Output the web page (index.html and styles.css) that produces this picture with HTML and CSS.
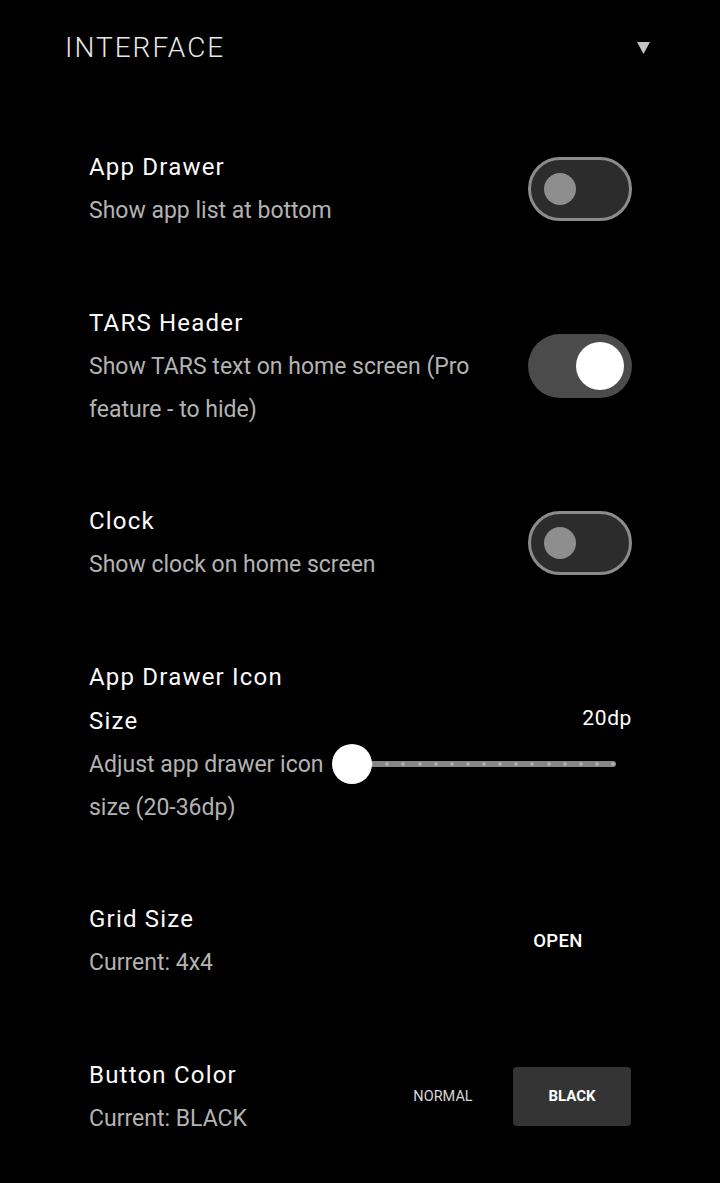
FILE: index.html
```html
<!DOCTYPE html>
<html>
<head>
<meta charset="utf-8">
<link rel="stylesheet" href="styles.css">
</head>
<body>
<div class="screen">
  <div class="section-header">
    <span class="section-title">INTERFACE</span>
    <svg class="caret" width="13" height="12" viewBox="0 0 13 12"><polygon points="0,0 13,0 6.5,12" fill="#c4c4c4"/></svg>
  </div>

  <div class="list">
    <div class="row">
      <div class="text">
        <div class="title">App Drawer</div>
        <div class="sub">Show app list at bottom</div>
      </div>
      <div class="switch off"><span class="knob"></span></div>
    </div>

    <div class="row">
      <div class="text">
        <div class="title">TARS Header</div>
        <div class="sub">Show TARS text on home screen (Pro feature - to hide)</div>
      </div>
      <div class="switch on"><span class="knob"></span></div>
    </div>

    <div class="row">
      <div class="text">
        <div class="title">Clock</div>
        <div class="sub">Show clock on home screen</div>
      </div>
      <div class="switch off"><span class="knob"></span></div>
    </div>

    <div class="row row-top">
      <div class="text narrow">
        <div class="title">App Drawer Icon Size</div>
        <div class="sub">Adjust app drawer icon size (20-36dp)</div>
      </div>
      <div class="slider-col">
        <div class="value">20dp</div>
        <div class="slider">
          <div class="track">
            <span class="tick"></span><span class="tick"></span><span class="tick"></span><span class="tick"></span><span class="tick"></span><span class="tick"></span><span class="tick"></span><span class="tick"></span><span class="tick"></span><span class="tick"></span><span class="tick"></span><span class="tick"></span><span class="tick"></span><span class="tick"></span><span class="tick"></span><span class="tick"></span><span class="tick"></span>
          </div>
          <span class="thumb"></span>
        </div>
      </div>
    </div>

    <div class="row">
      <div class="text">
        <div class="title">Grid Size</div>
        <div class="sub">Current: 4x4</div>
      </div>
      <div class="open-btn">OPEN</div>
    </div>

    <div class="row">
      <div class="text">
        <div class="title">Button Color</div>
        <div class="sub">Current: BLACK</div>
      </div>
      <div class="choices">
        <div class="choice">NORMAL</div>
        <div class="choice selected">BLACK</div>
      </div>
    </div>
  </div>
</div>
</body>
</html>
```

FILE: styles.css
```css
html, body {
  margin: 0;
  padding: 0;
  background: #000;
}

body {
  font-family: Roboto, "Noto Sans", "Liberation Sans", sans-serif;
  color: #fff;
  width: 720px;
  height: 1183px;
  overflow: hidden;
}

.screen {
  display: flex;
  flex-direction: column;
}

.section-header {
  height: 96px;
  display: flex;
  align-items: center;
  justify-content: space-between;
  padding: 0 70px 0 65px;
}

.section-title {
  font-size: 28px;
  font-weight: 300;
  letter-spacing: 2px;
  color: #e8e8e8;
  line-height: 34px;
}

.caret {
  display: block;
}

.list {
  display: flex;
  flex-direction: column;
  padding-top: 15px;
}

.row {
  display: flex;
  align-items: center;
  padding: 34.25px 89px 34.25px 89px;
}

.row-top {
  align-items: flex-start;
}

.text {
  flex: 1;
  min-width: 0;
  padding-right: 30px;
}

.text.narrow {
  flex: 0 0 240px;
  padding-right: 0;
}

.title {
  font-size: 24px;
  line-height: 44px;
  letter-spacing: 1.2px;
  color: #fafafa;
}

.sub {
  font-size: 23px;
  line-height: 43px;
  color: #b3b3b3;
}

.switch {
  flex: 0 0 auto;
  box-sizing: border-box;
  width: 104px;
  height: 64px;
  border-radius: 32px;
  display: flex;
  align-items: center;
  margin-right: -1px;
}

.switch.off {
  background: #2c2c2c;
  border: 3px solid #8c8c8c;
  padding-left: 13px;
}

.switch.off .knob {
  width: 32px;
  height: 32px;
  border-radius: 50%;
  background: #8e8e8e;
}

.switch.on {
  background: #4b4b4b;
  justify-content: flex-end;
  padding-right: 8px;
}

.switch.on .knob {
  width: 48px;
  height: 48px;
  border-radius: 50%;
  background: #fff;
}

.slider-col {
  flex: 1;
  display: flex;
  flex-direction: column;
  margin-top: 48px;
  margin-right: -1px;
}

.value {
  align-self: flex-end;
  font-size: 21px;
  line-height: 30px;
  letter-spacing: 0.6px;
  color: #fff;
}

.slider {
  position: relative;
  height: 40px;
  margin-top: 11px;
  margin-left: 3px;
  padding: 0 16px 0 20px;
  display: flex;
  align-items: center;
}

.track {
  flex: 1;
  height: 6px;
  border-radius: 3px;
  background: #858585;
  display: flex;
  justify-content: space-between;
  align-items: center;
  padding: 0 1px;
}

.tick {
  width: 4px;
  height: 4px;
  border-radius: 50%;
  background: #adadad;
}

.thumb {
  position: absolute;
  left: 0;
  top: 0;
  width: 40px;
  height: 40px;
  border-radius: 50%;
  background: #fff;
}

.open-btn {
  flex: 0 0 146px;
  text-align: center;
  font-size: 18.5px;
  font-weight: 500;
  letter-spacing: 0.4px;
  color: #fff;
  line-height: 40px;
}

.choices {
  display: flex;
  gap: 11px;
}

.choice {
  width: 118px;
  height: 59px;
  border-radius: 4px;
  display: flex;
  align-items: center;
  justify-content: center;
  font-size: 14.5px;
  color: #d6d6d6;
}

.choice.selected {
  background: #343434;
  font-size: 15px;
  font-weight: 700;
  color: #fff;
}
```
